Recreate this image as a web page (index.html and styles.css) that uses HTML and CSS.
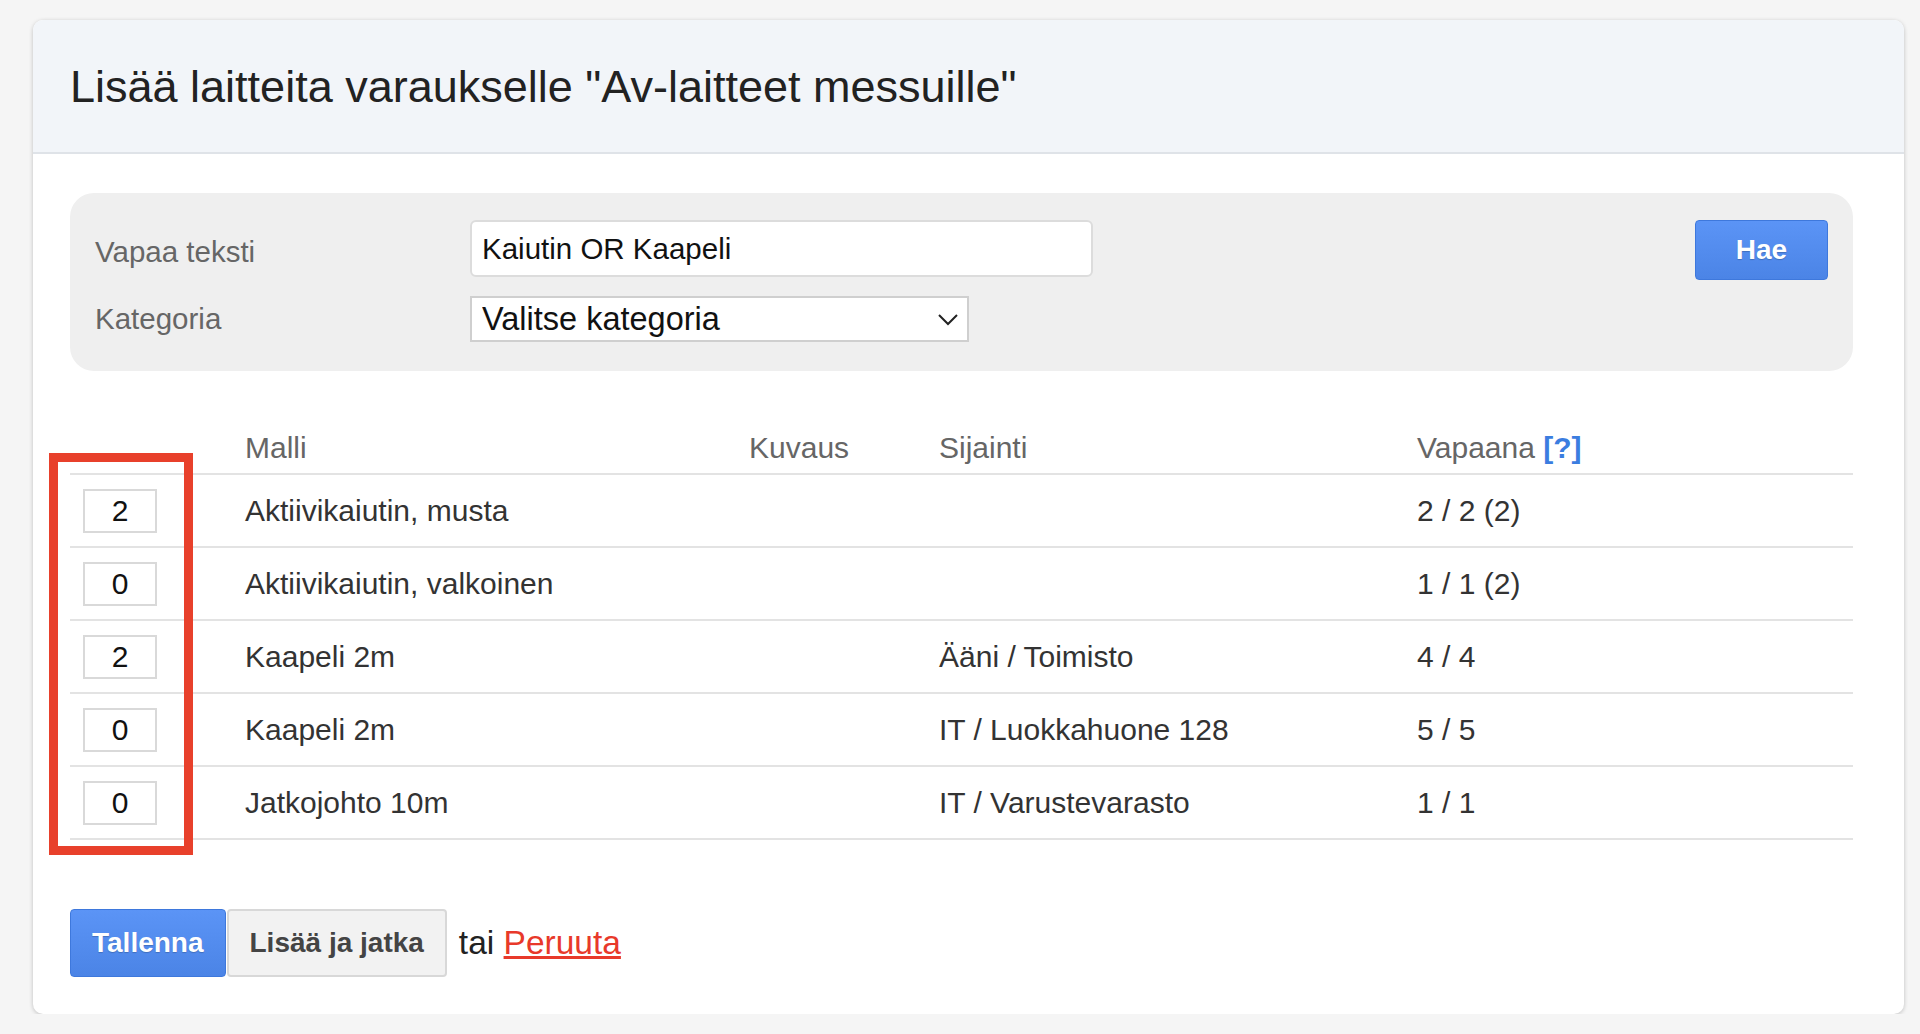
FILE: index.html
```html
<!DOCTYPE html>
<html lang="fi">
<head>
    <meta charset="UTF-8">
    <title>Lisää laitteita varaukselle</title>
    <link rel="stylesheet" href="styles.css">
</head>
<body>
    <div class="card">
        <div class="card-header">
            <h1>Lisää laitteita varaukselle "Av-laitteet messuille"</h1>
        </div>

        <div class="card-body">
            <!-- hakulomake -->
            <form class="search-panel">
                <div class="search-fields">
                    <div class="field-row">
                        <label class="field-label field-label-low">Vapaa teksti</label>
                        <input class="text-input" type="text" value="Kaiutin OR Kaapeli">
                    </div>
                    <div class="field-row">
                        <label class="field-label">Kategoria</label>
                        <div class="select-wrap">
                            <select class="select-input">
                                <option>Valitse kategoria</option>
                            </select>
                            <svg class="select-arrow" width="20" height="12" viewBox="0 0 20 12">
                                <polyline points="1,1 10,10 19,1" fill="none" stroke="#222" stroke-width="2"/>
                            </svg>
                        </div>
                    </div>
                </div>
                <button class="btn btn-primary btn-search" type="button">Hae</button>
            </form>

            <!-- laitelista -->
            <div class="table-wrap">
                <table class="device-table">
                    <colgroup>
                        <col class="col-qty">
                        <col class="col-model">
                        <col class="col-desc">
                        <col class="col-place">
                        <col class="col-free">
                    </colgroup>
                    <thead>
                        <tr>
                            <th></th>
                            <th>Malli</th>
                            <th>Kuvaus</th>
                            <th>Sijainti</th>
                            <th>Vapaana <a class="help-link" href="#">[?]</a></th>
                        </tr>
                    </thead>
                    <tbody>
                        <tr>
                            <td><input class="qty-input" type="text" value="2"></td>
                            <td>Aktiivikaiutin, musta</td>
                            <td></td>
                            <td></td>
                            <td>2 / 2 (2)</td>
                        </tr>
                        <tr>
                            <td><input class="qty-input" type="text" value="0"></td>
                            <td>Aktiivikaiutin, valkoinen</td>
                            <td></td>
                            <td></td>
                            <td>1 / 1 (2)</td>
                        </tr>
                        <tr>
                            <td><input class="qty-input" type="text" value="2"></td>
                            <td>Kaapeli 2m</td>
                            <td></td>
                            <td>Ääni / Toimisto</td>
                            <td>4 / 4</td>
                        </tr>
                        <tr>
                            <td><input class="qty-input" type="text" value="0"></td>
                            <td>Kaapeli 2m</td>
                            <td></td>
                            <td>IT / Luokkahuone 128</td>
                            <td>5 / 5</td>
                        </tr>
                        <tr>
                            <td><input class="qty-input" type="text" value="0"></td>
                            <td>Jatkojohto 10m</td>
                            <td></td>
                            <td>IT / Varustevarasto</td>
                            <td>1 / 1</td>
                        </tr>
                    </tbody>
                </table>
                <div class="highlight-box"></div>
            </div>

            <div class="form-actions">
                <button class="btn btn-primary" type="button">Tallenna</button><button class="btn btn-default" type="button">Lisää ja jatka</button>
                <span class="actions-or">tai <a class="cancel-link" href="#">Peruuta</a></span>
            </div>
        </div>
    </div>
</body>
</html>
```

FILE: styles.css
```css
* {
    margin: 0;
    padding: 0;
    box-sizing: border-box;
}

body {
    background: #f5f5f5;
    font-family: "Liberation Sans", Arial, sans-serif;
    color: #333;
    padding: 20px 16px 0 33px;
}

/* kortti */
.card {
    width: 1871px;
    background: #fff;
    border-radius: 10px;
    box-shadow: 0 1px 4px rgba(0, 0, 0, 0.22);
    overflow: hidden;
}

.card-header {
    height: 134px;
    display: flex;
    align-items: center;
    padding: 2px 0 0 37px;
    background: #f2f5f9;
    border-bottom: 2px solid #dfe3e8;
}

.card-header h1 {
    font-size: 45px;
    font-weight: normal;
    color: #222;
}

.card-body {
    padding: 39px 51px 37px 37px;
}

/* hakulomake */
.search-panel {
    display: flex;
    align-items: flex-start;
    height: 178px;
    padding: 27px 25px 0 25px;
    background: #efefef;
    border-radius: 24px;
}

.search-fields {
    flex: 1;
    display: flex;
    flex-direction: column;
    gap: 19px;
}

.field-row {
    display: flex;
    align-items: center;
}

.field-label {
    width: 375px;
    font-size: 29.5px;
    color: #666;
}

.field-label-low {
    padding-top: 6px;
}

.text-input {
    width: 623px;
    height: 57px;
    padding: 0 10px;
    font-family: inherit;
    font-size: 29.5px;
    color: #111;
    background: #fff;
    border: 2px solid #dcdcdc;
    border-radius: 6px;
    outline: none;
}

.select-wrap {
    position: relative;
    width: 499px;
    height: 46px;
}

.select-input {
    appearance: none;
    -webkit-appearance: none;
    width: 100%;
    height: 100%;
    padding: 0 10px;
    font-family: inherit;
    font-size: 32.5px;
    color: #111;
    background: #fff;
    border: 2px solid #cfcfcf;
    border-radius: 0;
}

.select-arrow {
    position: absolute;
    right: 11px;
    top: 18px;
    pointer-events: none;
}

/* napit */
.btn {
    height: 68px;
    padding: 0 21px;
    font-family: inherit;
    font-size: 28px;
    font-weight: bold;
    border-radius: 4px;
    cursor: pointer;
    vertical-align: middle;
}

.btn-primary {
    color: #fff;
    background: linear-gradient(#5b94f6, #4b84e6);
    border: 1px solid #3e78dc;
    text-shadow: 0 1px 1px rgba(0, 0, 0, 0.2);
}

.btn-default {
    margin-left: 1px;
    color: #444;
    background: #f2f2f2;
    border: 2px solid #d8d8d8;
}

.btn-search {
    width: 133px;
    height: 60px;
}

/* taulukko */
.table-wrap {
    position: relative;
    margin-top: 43px;
}

.device-table {
    width: 1783px;
    table-layout: fixed;
    border-collapse: collapse;
    font-size: 30px;
}

.col-qty { width: 162px; }
.col-model { width: 504px; }
.col-desc { width: 190px; }
.col-place { width: 478px; }
.col-free { width: 449px; }

.device-table th {
    height: 60px;
    padding: 0 13px 8px;
    text-align: left;
    vertical-align: bottom;
    font-weight: normal;
    color: #666;
    border-bottom: 2px solid #e3e3e3;
}

.device-table td {
    height: 73px;
    padding: 0 13px;
    color: #333;
    border-bottom: 2px solid #e3e3e3;
}

.help-link {
    color: #3b7de0;
    font-weight: bold;
    text-decoration: none;
}

.qty-input {
    display: block;
    width: 74px;
    height: 44px;
    font-family: inherit;
    font-size: 30px;
    color: #111;
    text-align: center;
    border: 2px solid #d9d9d9;
    outline: none;
}

/* korostus */
.highlight-box {
    position: absolute;
    left: -21px;
    top: 39px;
    width: 144px;
    height: 402px;
    border: 9px solid #e8402b;
    pointer-events: none;
}

/* toiminnot */
.form-actions {
    margin-top: 69px;
    display: flex;
    align-items: center;
}

.actions-or {
    margin-left: 12px;
    font-size: 33.5px;
    color: #222;
}

.cancel-link {
    color: #e8392a;
}
```
